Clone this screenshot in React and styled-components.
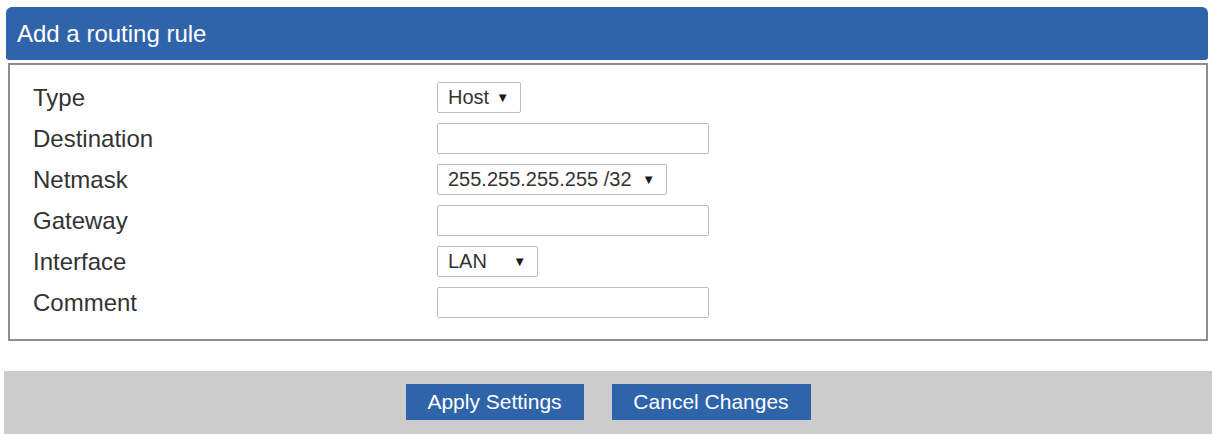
import React from 'react';
import styled, { createGlobalStyle } from 'styled-components';

const GlobalStyle = createGlobalStyle`
  html, body {
    margin: 0;
    padding: 0;
    background: #ffffff;
    font-family: 'Liberation Sans', Arial, sans-serif;
  }
`;

const blue = '#2f64aa';

const rows = [
  { label: 'Type', kind: 'select', value: 'Host', width: 84 },
  { label: 'Destination', kind: 'input' },
  { label: 'Netmask', kind: 'select', value: '255.255.255.255 /32', width: 230 },
  { label: 'Gateway', kind: 'input' },
  { label: 'Interface', kind: 'select', value: 'LAN', width: 101 },
  { label: 'Comment', kind: 'input' }
];

const App = () => (
  <>
    <GlobalStyle />
    <Page>
      <Header>Add a routing rule</Header>
      <FormBox>
        {rows.map(row => (
          <Row key={row.label}>
            <Label>{row.label}</Label>
            {row.kind === 'select' ? (
              <SelectBox width={row.width}>
                <span>{row.value}</span>
                <Arrow>▼</Arrow>
              </SelectBox>
            ) : (
              <TextInput type="text" />
            )}
          </Row>
        ))}
      </FormBox>
      <Footer>
        <Button>Apply Settings</Button>
        <Button wide>Cancel Changes</Button>
      </Footer>
    </Page>
  </>
);

export default App;

const Page = styled.main`
  display: flex;
  flex-direction: column;
  padding-top: 7px;
`;

const Header = styled.h2`
  margin: 0 4px 0 6px;
  height: 53px;
  display: flex;
  align-items: center;
  padding: 0 11px;
  box-sizing: border-box;
  background: ${blue};
  border-radius: 6px 6px 3px 3px;
  color: #ffffff;
  font-size: 24px;
  font-weight: normal;
`;

const FormBox = styled.section`
  margin: 3px 4px 0 8px;
  border: 2px solid #8c8c8c;
  padding: 17px 0 21px 23px;
  display: flex;
  flex-direction: column;
  gap: 10px;
`;

const Row = styled.div`
  display: grid;
  grid-template-columns: 404px auto;
  align-items: center;
  height: 31px;
`;

const Label = styled.label`
  font-size: 24px;
  color: #333333;
`;

const SelectBox = styled.div`
  width: ${({ width }) => width}px;
  height: 31px;
  box-sizing: border-box;
  border: 1px solid #bdbdbd;
  border-radius: 2px;
  display: flex;
  align-items: center;
  justify-content: space-between;
  padding: 0 11px 0 10px;
  font-size: 20px;
  color: #333333;
`;

const Arrow = styled.span`
  font-size: 13px;
  color: #1a1a1a;
`;

const TextInput = styled.input`
  width: 272px;
  height: 31px;
  box-sizing: border-box;
  border: 1px solid #bdbdbd;
  border-radius: 2px;
  margin: 0;
  outline: none;
  font-family: inherit;
`;

const Footer = styled.footer`
  margin: 30px 0 0 4px;
  height: 63px;
  background: #cccccc;
  display: flex;
  justify-content: center;
  align-items: flex-start;
  padding-top: 13px;
  box-sizing: border-box;
  gap: 28px;
`;

const Button = styled.button`
  width: ${({ wide }) => (wide ? 199 : 178)}px;
  height: 36px;
  border: none;
  background: ${blue};
  color: #ffffff;
  font-family: 'Liberation Sans', Arial, sans-serif;
  font-size: 21px;
  padding: 0;
  cursor: pointer;
`;
